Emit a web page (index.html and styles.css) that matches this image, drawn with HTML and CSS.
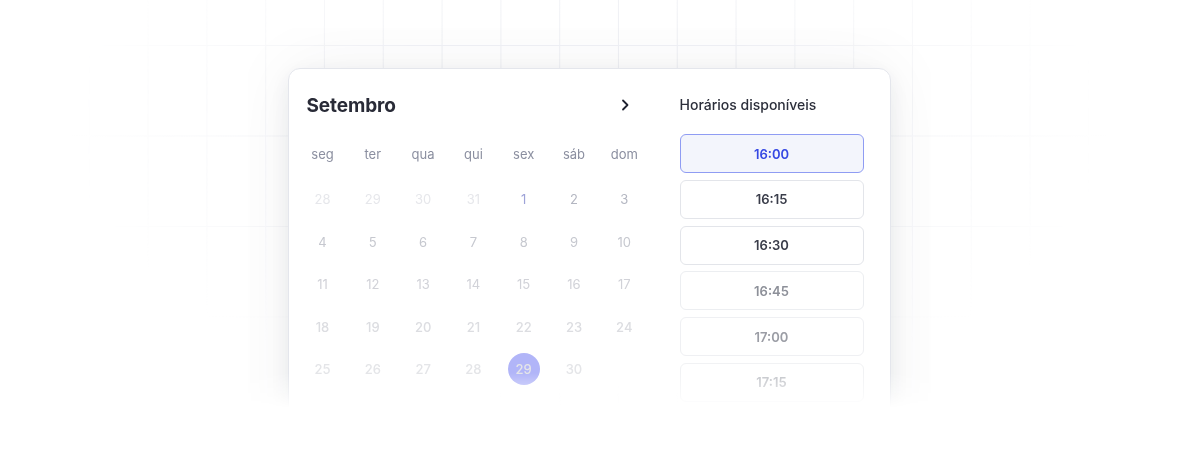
FILE: index.html
```html
<!DOCTYPE html>
<html>
	<head>
		<meta charset="utf-8">
		<title>Agendamento</title>
		<link rel="stylesheet" href="styles.css">
	</head>
	<body>
		<div class="stage">
			<div class="frame">
				<div class="card">
					<section class="calendar">
						<div class="cal-head">
							<h2>Setembro</h2>
							<svg class="next" width="16" height="16" viewBox="0 0 16 16" fill="none">
								<path d="M6 3.5 L10.5 8 L6 12.5" stroke="#1f2230" stroke-width="1.8" stroke-linecap="round" stroke-linejoin="round"/>
							</svg>
						</div>
						<div class="weekdays">
							<span>seg</span><span>ter</span><span>qua</span><span>qui</span><span>sex</span><span>sáb</span><span>dom</span>
						</div>
						<div class="days">
							<span class="off">28</span><span class="off">29</span><span class="off">30</span><span class="off">31</span>
							<span class="first">1</span><span>2</span><span>3</span>
							<span>4</span><span>5</span><span>6</span><span>7</span><span>8</span><span>9</span><span>10</span>
							<span>11</span><span>12</span><span>13</span><span>14</span><span>15</span><span>16</span><span>17</span>
							<span>18</span><span>19</span><span>20</span><span>21</span><span>22</span><span>23</span><span>24</span>
							<span>25</span><span>26</span><span>27</span><span>28</span><span class="picked">29</span><span>30</span><span></span>
						</div>
					</section>
					<section class="slots">
						<h3>Horários disponíveis</h3>
						<ul>
							<li class="active">16:00</li>
							<li>16:15</li>
							<li>16:30</li>
							<li>16:45</li>
							<li>17:00</li>
							<li>17:15</li>
						</ul>
					</section>
				</div>
			</div>
		</div>
	</body>
</html>
```
FILE: styles.css
```css
html, body {margin: 0; padding: 0; background: #fff;}
body {font-family: Inter, "Noto Sans", sans-serif;}

.stage {position: relative; width: 1178px; height: 452px; overflow: hidden; padding-top: 28px; box-sizing: border-box;}
/* grade de fundo */
.stage::before {
	content: "";
	position: absolute;
	inset: 0;
	background-image: linear-gradient(to right, #f0f1f5 1px, transparent 1px), linear-gradient(to bottom, #f0f1f5 1px, transparent 1px);
	background-size: 58.8px 90.5px;
	background-position: 30px 45px;
	-webkit-mask-image: radial-gradient(ellipse 44% 62% at 50% 28%, #000 40%, transparent 100%);
	mask-image: radial-gradient(ellipse 44% 62% at 50% 28%, #000 40%, transparent 100%);
}

/* moldura para o degradê de baixo (inclui a sombra) */
.frame {
	position: relative;
	width: 683px;
	margin: 0 auto;
	padding: 40px 40px 0;
	box-sizing: border-box;
	-webkit-mask-image: linear-gradient(to bottom, #000 345px, rgba(0,0,0,0.5) 365px, transparent 380px);
	mask-image: linear-gradient(to bottom, #000 345px, rgba(0,0,0,0.5) 365px, transparent 380px);
}

.card {
	height: 384px;
	box-sizing: border-box;
	display: flex;
	gap: 39px;
	padding: 24px 26px 0 18px;
	background: #fff;
	border: 1px solid #e4e6ec;
	border-radius: 12px;
	box-shadow: 0 6px 24px rgba(30, 35, 60, 0.08), 0 0 70px rgba(30, 35, 60, 0.06);
}

.calendar {width: 334px;}
.cal-head {display: flex; align-items: center; justify-content: space-between; height: 24px;}
.cal-head h2 {margin: 0; font-size: 19px; font-weight: 700; color: #292b37; letter-spacing: -0.1px;}
.next {margin-right: 8px;}

.weekdays, .days {display: grid; grid-template-columns: repeat(7, 32px); column-gap: 18.3px;}
.weekdays {margin-top: 25px; height: 24px; align-items: center;}
.weekdays span {text-align: center; font-size: 13px; color: #8b8fa0;}

.days {margin-top: 17px; row-gap: 10.5px;}
.days span {height: 32px; display: flex; align-items: center; justify-content: center; font-size: 13px; color: #b3b6c1;}
.days span:nth-child(n+8) {color: #c6c8cf;}
.days span:nth-child(n+15) {color: #d1d2d8;}
.days span:nth-child(n+22) {color: #dcdde1; font-weight: 500;}
.days span:nth-child(n+29) {color: #e4e5e8; font-weight: 500;}
.days .off {color: #e6e7eb;}
.days .first {color: #9ea3d8;}
.days .picked {border-radius: 50%; background: #b1b5f8; color: #fff; font-weight: 700;}

.slots {width: 184px;}
.slots h3 {margin: 0; height: 24px; line-height: 24px; font-size: 14px; font-weight: 500; color: #2c2f3b;}
.slots ul {margin: 17px 0 0; padding: 0; list-style: none; display: flex; flex-direction: column; gap: 6.8px;}
.slots li {height: 39px; box-sizing: border-box; border: 1px solid #e3e5ea; border-radius: 6px; display: flex; align-items: center; justify-content: center; font-size: 13px; font-weight: 600; color: #3a3d4a;}
.slots li.active {background: #f3f5fc; border-color: #8f9cf3; color: #3548e3;}
.slots li:nth-child(4) {color: #8d9099; border-color: #eceef1;}
.slots li:nth-child(5) {color: #9b9da5; border-color: #eff0f3;}
.slots li:nth-child(6) {color: #c3c5ca; border-color: #f1f2f4;}
```
